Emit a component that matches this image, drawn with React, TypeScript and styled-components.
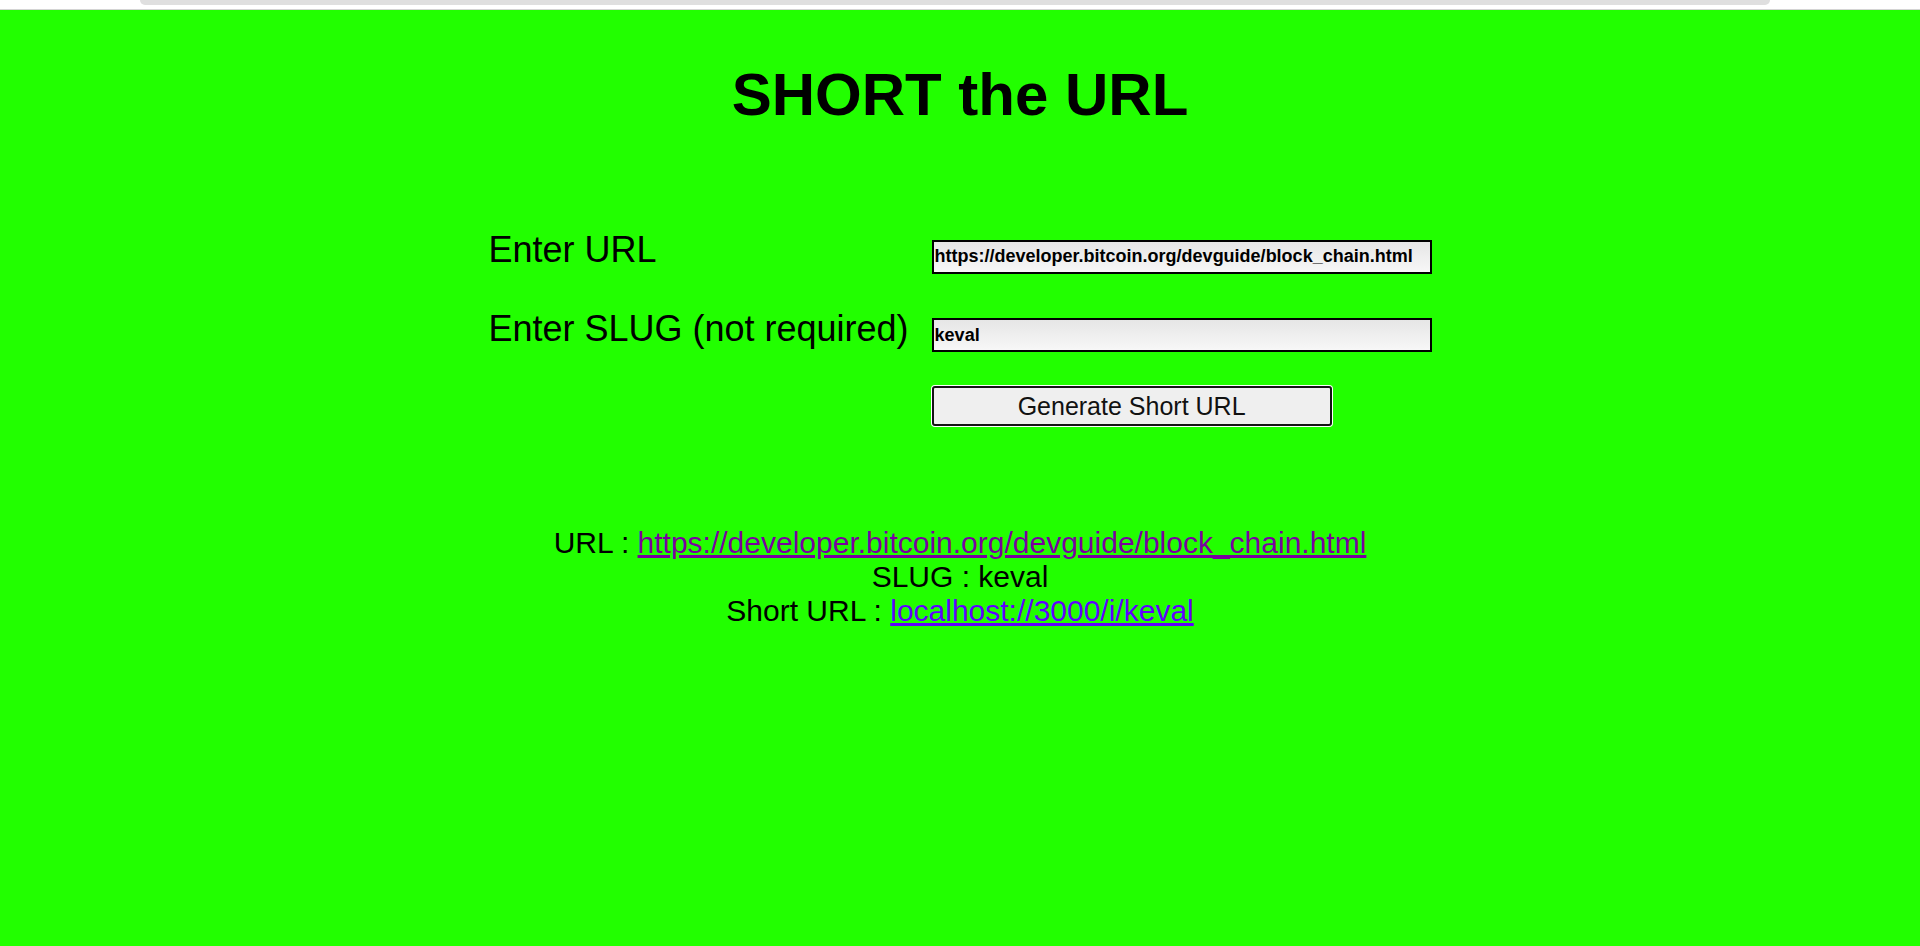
import React from "react";
import styled, { createGlobalStyle } from "styled-components";

const GlobalStyle = createGlobalStyle`
  html, body {
    margin: 0;
    padding: 0;
    background: #22ff00;
    font-family: "Liberation Sans", Arial, sans-serif;
  }
  #root {
    min-height: 946px;
    display: flex;
    flex-direction: column;
  }
`;

const TopStrip = styled.div`
  height: 9px;
  background: #ffffff;
  border-bottom: 1px solid #d4d4d4;
  display: flex;
  justify-content: center;
  flex-shrink: 0;
`;

const TabBar = styled.div`
  width: 1630px;
  height: 5px;
  margin-left: -10px;
  background: #dfdfdf;
  border-radius: 0 0 8px 8px;
`;

const Page = styled.main`
  flex: 1;
  background: #22ff00;
  display: flex;
  flex-direction: column;
  align-items: center;
  color: #000;
`;

const Title = styled.h1`
  margin: 50px 0 0;
  font-size: 60px;
  font-weight: 700;
  line-height: normal;
`;

const Form = styled.form`
  margin-top: 100px;
  display: grid;
  grid-template-columns: auto 500px;
  column-gap: 23px;
  row-gap: 34px;
  align-items: baseline;
`;

const Label = styled.label`
  font-size: 36px;
  line-height: normal;
  white-space: nowrap;
`;

const TextInput = styled.input`
  box-sizing: border-box;
  width: 500px;
  height: 34px;
  margin: 0;
  padding: 0 1px;
  border: 2px solid #000;
  background: linear-gradient(#e6e6e6, #f7f7f7);
  font-family: "Liberation Sans", Arial, sans-serif;
  font-weight: 700;
  font-size: 18px;
  color: #000;
  outline: none;
`;

const Spacer = styled.span``;

const SubmitButton = styled.button`
  box-sizing: border-box;
  width: 400px;
  height: 40px;
  margin: 0;
  padding: 0;
  border: 2px solid #141414;
  border-radius: 3px;
  box-shadow: 0 0 0 1px #ffffff;
  background: #efefef;
  font-family: "Liberation Sans", Arial, sans-serif;
  font-size: 25px;
  color: #111;
  cursor: pointer;
`;

const Result = styled.div`
  margin-top: 100px;
  font-size: 30px;
  line-height: normal;
  text-align: center;
`;

const Line = styled.div``;

const Link = styled.a<{ $visited?: boolean }>`
  color: ${(p) => (p.$visited ? "#7a00a0" : "#6000ff")};
  text-decoration: underline;
`;

export default function App() {
  return (
    <>
      <GlobalStyle />
      <TopStrip>
        <TabBar />
      </TopStrip>
      <Page>
        <Title>SHORT the URL</Title>
        <Form onSubmit={(e) => e.preventDefault()}>
          <Label htmlFor="url">Enter URL</Label>
          <TextInput
            id="url"
            defaultValue="https://developer.bitcoin.org/devguide/block_chain.html"
          />
          <Label htmlFor="slug">Enter SLUG (not required)</Label>
          <TextInput id="slug" defaultValue="keval" />
          <Spacer />
          <SubmitButton type="submit">Generate Short URL</SubmitButton>
        </Form>
        <Result>
          <Line>
            URL :{" "}
            <Link $visited href="#">
              https://developer.bitcoin.org/devguide/block_chain.html
            </Link>
          </Line>
          <Line>SLUG : keval</Line>
          <Line>
            Short URL : <Link href="#">localhost://3000/i/keval</Link>
          </Line>
        </Result>
      </Page>
    </>
  );
}
